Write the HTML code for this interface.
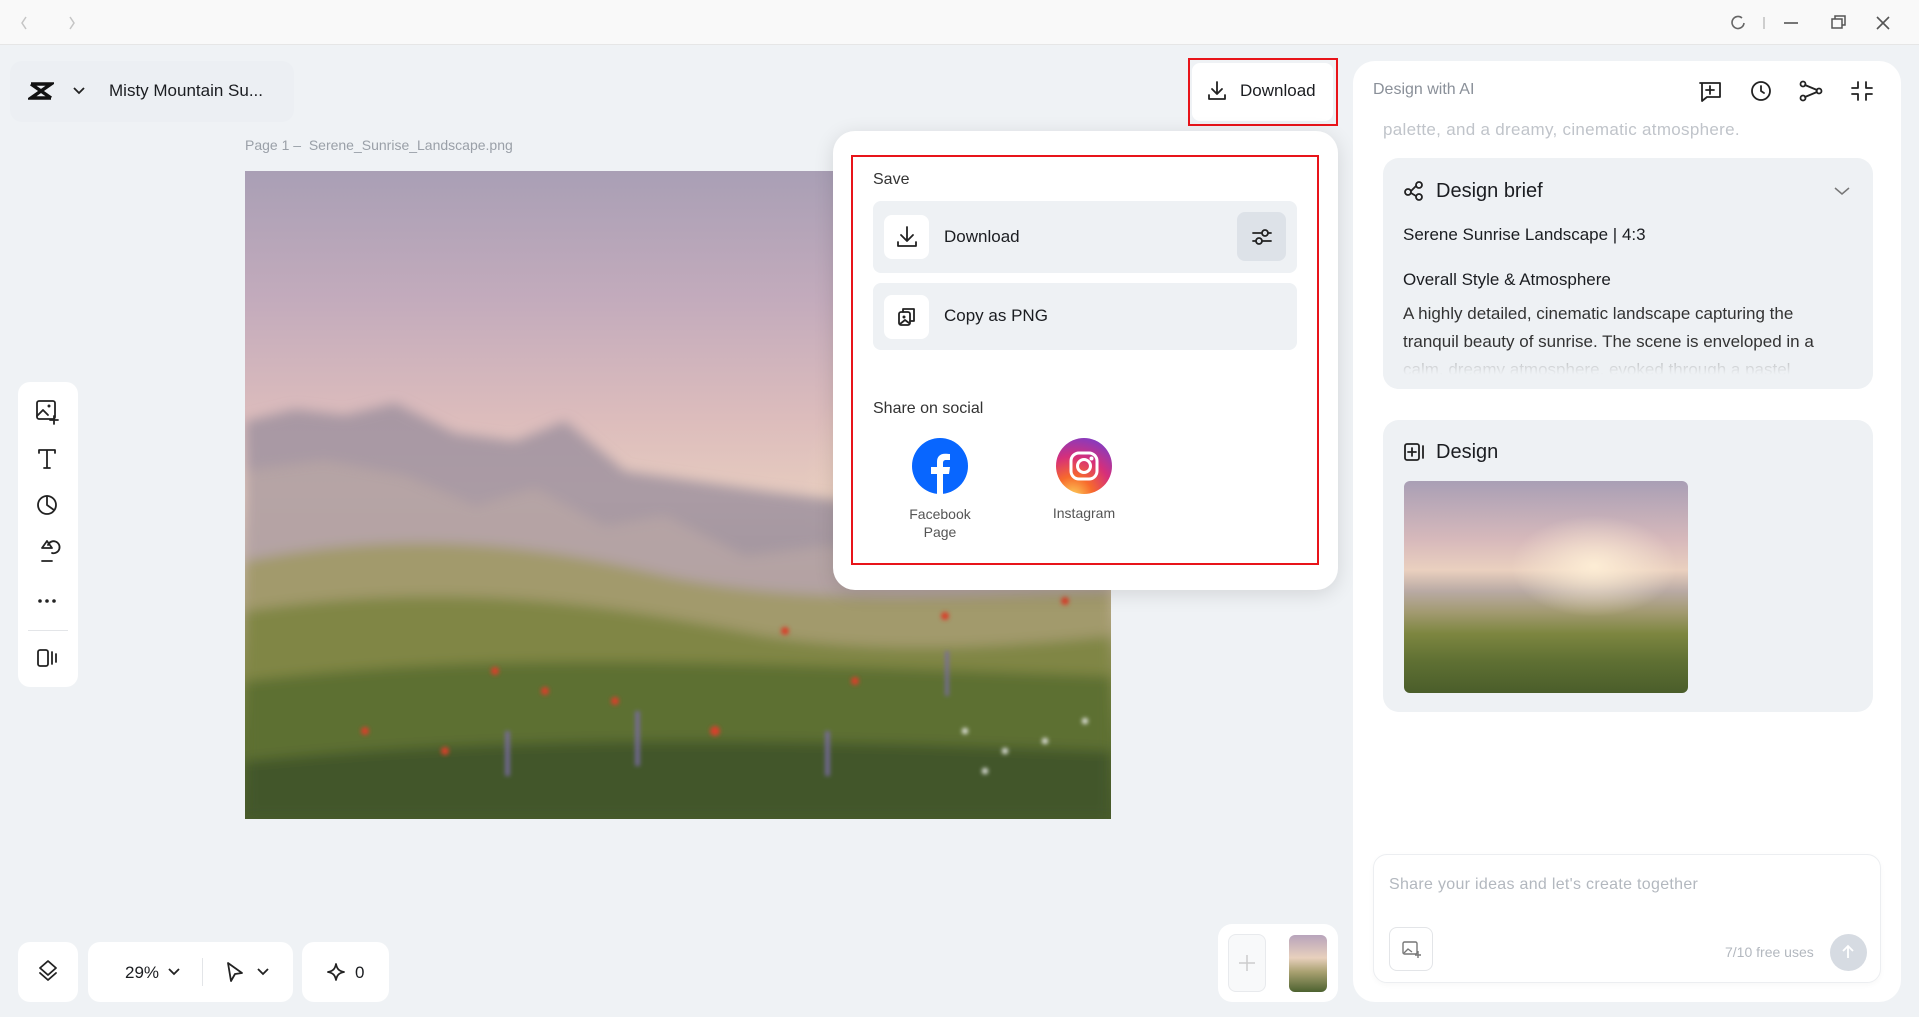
<!DOCTYPE html>
<html><head><meta charset="utf-8"><style>
*{box-sizing:border-box;margin:0;padding:0}
body{width:1919px;height:1017px;overflow:hidden;background:#eff2f5;font-family:"Liberation Sans",sans-serif;color:#1b1d21;position:relative}
.abs{position:absolute}
.white{background:#fff}
svg{display:block}
.ic{stroke:#222;fill:none;stroke-width:1.8;stroke-linecap:round;stroke-linejoin:round}
</style></head><body>
<div class="abs" style="left:0;top:0;width:1919px;height:45px;background:#f9f9f9;border-bottom:1px solid #e6e6e6"></div>
<svg class="abs" style="left:18px;top:13px" width="60" height="20"><path d="M8 4 4 10 8 16M52 4 56 10 52 16" stroke="#c5c5c5" stroke-width="1.5" fill="none"/></svg>
<svg class="abs" style="left:1724px;top:12px" width="180" height="22"><path d="M18 6a6 6 0 1 0 2 5" stroke="#666" stroke-width="1.6" fill="none"/><path d="M40 5v12" stroke="#bbb" stroke-width="1.4"/><path d="M60 11h14" stroke="#555" stroke-width="1.6"/><rect x="108" y="7" width="10" height="9" stroke="#555" stroke-width="1.5" fill="none"/><path d="M111 7V4h10v9h-3" stroke="#555" stroke-width="1.5" fill="none"/><path d="M153 5l12 12M165 5l-12 12" stroke="#555" stroke-width="1.6"/></svg>

<div class="abs" style="left:10px;top:61px;width:284px;height:61px;background:#eceff3;border-radius:12px"></div>
<svg class="abs" style="left:28px;top:81px" width="26" height="20"><path d="M3 3h20L3 17h20M3 3l20 14" stroke="#111" stroke-width="3.5" fill="none"/></svg>
<svg class="abs" style="left:72px;top:86px" width="14" height="10"><path d="M2 2l5 5 5-5" stroke="#222" stroke-width="1.8" fill="none"/></svg>
<div class="abs" style="left:109px;top:81px;font-size:17px;font-weight:500">Misty Mountain Su...</div>

<div class="abs white" style="left:1192px;top:63px;width:141px;height:58px;border-radius:8px"></div>
<div class="abs" style="left:1188px;top:58px;width:150px;height:68px;border:2px solid #e8141a"></div>
<svg class="abs" style="left:1206px;top:80px" width="22" height="22"><path class="ic" d="M11 2v12M6 9l5 5 5-5M3 15v4h16v-4"/></svg>
<div class="abs" style="left:1240px;top:81px;font-size:17px;font-weight:500">Download</div>

<div class="abs" style="left:245px;top:137px;font-size:14px;color:#9aa0a8">Page 1 –&nbsp; Serene_Sunrise_Landscape.png</div>

<div class="abs" style="left:245px;top:171px;width:866px;height:648px;overflow:hidden;background:linear-gradient(180deg,#a99fb5 0%,#c3abbc 20%,#dcbcbc 38%,#e6cbbf 50%,#c9b7ab 60%,#a69c78 70%,#868a4e 78%,#617236 88%,#4a5c2a 100%)">
<div class="abs" style="left:520px;top:140px;width:460px;height:380px;background:radial-gradient(circle,rgba(255,244,220,1) 0%,rgba(250,225,195,.6) 25%,rgba(250,220,190,0) 65%)"></div>
<svg class="abs" style="left:0;top:0" width="866" height="648"><defs><filter id="b"><feGaussianBlur stdDeviation="6"/></filter><filter id="b2"><feGaussianBlur stdDeviation="2"/></filter></defs>
<g filter="url(#b)">
<path d="M0 250 L50 238 100 244 150 232 210 262 270 270 320 250 380 300 450 310 520 320 600 330 700 320 780 330 866 320 V648 H0Z" fill="#9b8e9e" opacity=".8"/>
<path d="M0 300 L80 290 160 305 230 335 290 318 360 355 420 345 500 385 580 375 660 390 760 380 866 390 V648 H0Z" fill="#b9a7a6" opacity=".75"/>
<path d="M0 390 C150 360 280 370 420 405 C560 435 700 425 866 420 V648 H0Z" fill="#a29a6c"/>
<path d="M0 440 C200 410 350 430 520 465 C650 485 760 475 866 465 V648 H0Z" fill="#808645"/>
<path d="M0 510 C250 480 450 490 866 505 V648 H0Z" fill="#5d6f33"/>
<path d="M0 590 C300 560 600 570 866 580 V648 H0Z" fill="#43562a"/>
</g>
<g filter="url(#b2)">
<g fill="#d8402a"><circle cx="250" cy="500" r="4"/><circle cx="300" cy="520" r="4"/><circle cx="470" cy="560" r="5"/><circle cx="540" cy="460" r="4"/><circle cx="700" cy="445" r="4"/><circle cx="120" cy="560" r="4"/><circle cx="820" cy="430" r="4"/><circle cx="200" cy="580" r="4"/><circle cx="370" cy="530" r="4"/><circle cx="610" cy="510" r="4"/></g>
<g fill="#7a6ba8" opacity=".8"><rect x="260" y="560" width="5" height="45"/><rect x="390" y="540" width="5" height="55"/><rect x="580" y="560" width="5" height="45"/><rect x="700" y="480" width="4" height="45"/></g>
<g fill="#eee"><circle cx="720" cy="560" r="3"/><circle cx="760" cy="580" r="3"/><circle cx="800" cy="570" r="3"/><circle cx="740" cy="600" r="3"/><circle cx="840" cy="550" r="3"/></g>
</g>
</svg>
</div>

<div class="abs white" style="left:833px;top:131px;width:505px;height:459px;border-radius:22px;box-shadow:0 4px 20px rgba(0,0,0,.12)"></div>
<div class="abs" style="left:851px;top:155px;width:468px;height:410px;border:2px solid #e8141a"></div>
<div class="abs" style="left:873px;top:171px;font-size:16px;color:#333">Save</div>
<div class="abs" style="left:873px;top:201px;width:424px;height:72px;background:#eef1f4;border-radius:8px"></div>
<div class="abs white" style="left:884px;top:215px;width:45px;height:44px;border-radius:8px"></div>
<svg class="abs" style="left:895px;top:225px" width="24" height="24"><path class="ic" d="M12 2v14M6 10l6 6 6-6M3 17v4h18v-4" stroke-width="2"/></svg>
<div class="abs" style="left:944px;top:227px;font-size:17px;font-weight:500">Download</div>
<div class="abs" style="left:1237px;top:212px;width:49px;height:49px;background:#dde2e8;border-radius:8px"></div>
<svg class="abs" style="left:1250px;top:225px" width="24" height="24"><path class="ic" d="M3 8h18M3 16h18"/><circle cx="15" cy="8" r="3" fill="#dde2e8" stroke="#222" stroke-width="1.8"/><circle cx="9" cy="16" r="3" fill="#dde2e8" stroke="#222" stroke-width="1.8"/></svg>
<div class="abs" style="left:873px;top:283px;width:424px;height:67px;background:#eef1f4;border-radius:8px"></div>
<div class="abs white" style="left:884px;top:295px;width:45px;height:44px;border-radius:8px"></div>
<svg class="abs" style="left:896px;top:306px" width="22" height="22"><rect class="ic" x="3" y="6" width="11" height="13" rx="2"/><path class="ic" d="M7 6V3h11v12h-4"/><circle cx="8" cy="11" r="1.5" fill="#222"/><path class="ic" d="M4 18l5-4 4 3"/></svg>
<div class="abs" style="left:944px;top:306px;font-size:17px;font-weight:500">Copy as PNG</div>
<div class="abs" style="left:873px;top:400px;font-size:16px;color:#333">Share on social</div>
<svg class="abs" style="left:912px;top:438px" width="56" height="56"><circle cx="28" cy="28" r="28" fill="#0866ff"/><path d="M31 56V36h6l1-7h-7v-4c0-2 1-3 3-3h4v-6c-1 0-3-.3-5-.3-5 0-8 3-8 8v5.3h-6v7h6V56z" fill="#fff"/></svg>
<div class="abs" style="left:880px;top:505px;width:120px;text-align:center;font-size:14px;line-height:18px;color:#555">Facebook<br>Page</div>
<svg class="abs" style="left:1056px;top:438px" width="56" height="56"><defs><radialGradient id="ig" cx="0.3" cy="1.05" r="1.2"><stop offset="0" stop-color="#fdd35b"/><stop offset=".3" stop-color="#f76a2c"/><stop offset=".6" stop-color="#d62f7a"/><stop offset="1" stop-color="#6e3fd4"/></radialGradient></defs><circle cx="28" cy="28" r="28" fill="url(#ig)"/><rect x="15" y="15" width="26" height="26" rx="8" stroke="#fff" stroke-width="3" fill="none"/><circle cx="28" cy="28" r="6.5" stroke="#fff" stroke-width="3" fill="none"/><circle cx="35.5" cy="20.5" r="2" fill="#fff"/></svg>
<div class="abs" style="left:1024px;top:505px;width:120px;text-align:center;font-size:14px;color:#555">Instagram</div>

<div class="abs white" style="left:18px;top:382px;width:60px;height:305px;border-radius:12px"></div>
<svg class="abs" style="left:34px;top:398px" width="28" height="280">
<rect class="ic" x="3" y="3" width="18" height="18" rx="2"/><path class="ic" d="M3 18l6-6 5 5M20 18v8M16 22h8"/><circle cx="15" cy="8" r="1.5" fill="#222"/>
<path class="ic" d="M5 52h16M13 52v18M5 52v3M21 52v3M10 70h6"/>
<circle class="ic" cx="13" cy="107" r="9"/><path class="ic" d="M13 98v9l7 5"/>
<path class="ic" d="M8 150l5-7 5 7zM14 147a6 6 0 1 1 4 8M8 163h10"/>
<circle cx="6" cy="203" r="1.8" fill="#222"/><circle cx="13" cy="203" r="1.8" fill="#222"/><circle cx="20" cy="203" r="1.8" fill="#222"/>
<rect class="ic" x="4" y="252" width="10" height="16" rx="2"/><path class="ic" d="M18 254v12M22 256v8"/>
</svg>
<div class="abs" style="left:28px;top:630px;width:40px;height:1px;background:#e3e5e8"></div>

<div class="abs white" style="left:18px;top:942px;width:60px;height:60px;border-radius:12px"></div>
<svg class="abs" style="left:36px;top:959px" width="24" height="26"><path class="ic" d="M12 2l8 7-8 7-8-7zM4 14l8 7 8-7"/></svg>
<div class="abs white" style="left:88px;top:942px;width:205px;height:60px;border-radius:12px"></div>
<div class="abs" style="left:125px;top:963px;font-size:17px">29%</div>
<svg class="abs" style="left:167px;top:967px" width="14" height="10"><path d="M2 2l5 5 5-5" stroke="#222" stroke-width="1.8" fill="none"/></svg>
<div class="abs" style="left:202px;top:958px;width:1px;height:28px;background:#e3e5e8"></div>
<svg class="abs" style="left:224px;top:960px" width="22" height="24"><path class="ic" d="M4 3l14 10-7 1-4 7z"/></svg>
<svg class="abs" style="left:256px;top:967px" width="14" height="10"><path d="M2 2l5 5 5-5" stroke="#222" stroke-width="1.8" fill="none"/></svg>
<div class="abs white" style="left:302px;top:942px;width:87px;height:60px;border-radius:12px"></div>
<svg class="abs" style="left:326px;top:962px" width="20" height="20"><path class="ic" d="M10 2c1 5 3 7 8 8-5 1-7 3-8 8-1-5-3-7-8-8 5-1 7-3 8-8z"/></svg>
<div class="abs" style="left:355px;top:963px;font-size:17px">0</div>
<div class="abs white" style="left:1218px;top:924px;width:120px;height:78px;border-radius:14px"></div>
<div class="abs" style="left:1228px;top:934px;width:38px;height:58px;border:1px solid #e8eaed;border-radius:8px;background:#f8f9fa"></div>
<svg class="abs" style="left:1237px;top:953px" width="20" height="20"><path d="M10 2v16M2 10h16" stroke="#ccc" stroke-width="1.5"/></svg>
<div class="abs" style="left:1289px;top:935px;width:38px;height:57px;border-radius:6px;background:linear-gradient(180deg,#b8a4bc,#e8d0bd 40%,#a8a070 65%,#4d6230)"></div>

<div class="abs white" style="left:1353px;top:61px;width:548px;height:941px;border-radius:22px"></div>
<div class="abs" style="left:1373px;top:81px;font-size:16px;color:#8a9099">Design with AI</div>
<svg class="abs" style="left:1698px;top:78px" width="180" height="26">
<path class="ic" d="M2 5h20v14H9l-5 4V5z"/><path class="ic" d="M12 8v8M8 12h8"/>
<circle class="ic" cx="63" cy="13" r="9"/><path class="ic" d="M63 8v5l3 2"/>
<circle class="ic" cx="105" cy="6" r="2.5"/><circle class="ic" cx="105" cy="20" r="2.5"/><circle class="ic" cx="121" cy="13" r="2.5"/><path class="ic" d="M107 7l12 5M107 19l12-5"/>
<path class="ic" d="M160 4v6h-6M168 4v6h6M160 22v-6h-6M168 22v-6h6"/>
</svg>
<div class="abs" style="left:1383px;top:120px;font-size:17px;color:#c0c4ca;letter-spacing:.3px">palette, and a dreamy, cinematic atmosphere.</div>

<div class="abs" style="left:1383px;top:158px;width:490px;height:231px;background:#eef1f4;border-radius:16px;overflow:hidden">
<svg class="abs" style="left:20px;top:22px" width="24" height="22"><circle class="ic" cx="5" cy="12" r="3"/><circle class="ic" cx="16" cy="5" r="3"/><circle class="ic" cx="16" cy="17" r="3"/><path class="ic" d="M8 11l5-5M8 13l5 3"/></svg>
<div class="abs" style="left:53px;top:22px;font-size:20px;font-weight:500">Design brief</div>
<svg class="abs" style="left:450px;top:28px" width="18" height="10"><path d="M2 2l7 6 7-6" stroke="#777" stroke-width="1.5" fill="none"/></svg>
<div class="abs" style="left:20px;top:67px;font-size:17px;font-weight:500">Serene Sunrise Landscape | 4:3</div>
<div class="abs" style="left:20px;top:112px;font-size:17px;font-weight:500">Overall Style &amp; Atmosphere</div>
<div class="abs" style="left:20px;top:142px;width:450px;font-size:17px;line-height:28px;color:#333">A highly detailed, cinematic landscape capturing the tranquil beauty of sunrise. The scene is enveloped in a calm, dreamy atmosphere, evoked through a pastel</div>
<div class="abs" style="left:0;top:195px;width:490px;height:36px;background:linear-gradient(rgba(238,241,244,.6),#eef1f4 60%)"></div>
</div>

<div class="abs" style="left:1383px;top:420px;width:490px;height:292px;background:#eef1f4;border-radius:16px"></div>
<svg class="abs" style="left:1403px;top:441px" width="24" height="22"><rect class="ic" x="2" y="3" width="14" height="16" rx="2"/><path class="ic" d="M9 7v8M5 11h8M20 5v12"/></svg>
<div class="abs" style="left:1436px;top:441px;font-size:20px;font-weight:500">Design</div>
<div class="abs" style="left:1404px;top:481px;width:284px;height:212px;border-radius:6px;overflow:hidden;background:linear-gradient(180deg,#a99fb5 0%,#d7b9bb 28%,#ead0bf 42%,#b9aaa4 52%,#a29a70 62%,#7d8640 72%,#5f7033 85%,#4a5d2a 100%)">
<div class="abs" style="left:100px;top:30px;width:180px;height:110px;background:radial-gradient(ellipse,rgba(255,240,215,.9),rgba(255,240,215,0) 65%)"></div>
</div>

<div class="abs white" style="left:1373px;top:854px;width:508px;height:129px;border:1px solid #eceef1;border-radius:14px;box-shadow:0 2px 6px rgba(0,0,0,.03)"></div>
<div class="abs" style="left:1389px;top:876px;font-size:16px;color:#b3b8bf;letter-spacing:.3px">Share your ideas and let's create together</div>
<div class="abs" style="left:1389px;top:927px;width:44px;height:44px;border:1px solid #e3e5e8;border-radius:8px"></div>
<svg class="abs" style="left:1401px;top:939px" width="22" height="20"><rect x="2" y="3" width="14" height="12" rx="1.5" stroke="#777" stroke-width="1.4" fill="none"/><path d="M3 14l4-4 4 3M17 12v7M14 16h6" stroke="#777" stroke-width="1.4" fill="none"/></svg>
<div class="abs" style="left:1725px;top:944px;font-size:14px;color:#b3b8bf">7/10 free uses</div>
<div class="abs" style="left:1830px;top:934px;width:37px;height:37px;border-radius:50%;background:#d6dbe2"></div>
<svg class="abs" style="left:1838px;top:942px" width="20" height="20"><path d="M10 16V4M5 9l5-5 5 5" stroke="#fff" stroke-width="1.8" fill="none"/></svg>
</body></html>
